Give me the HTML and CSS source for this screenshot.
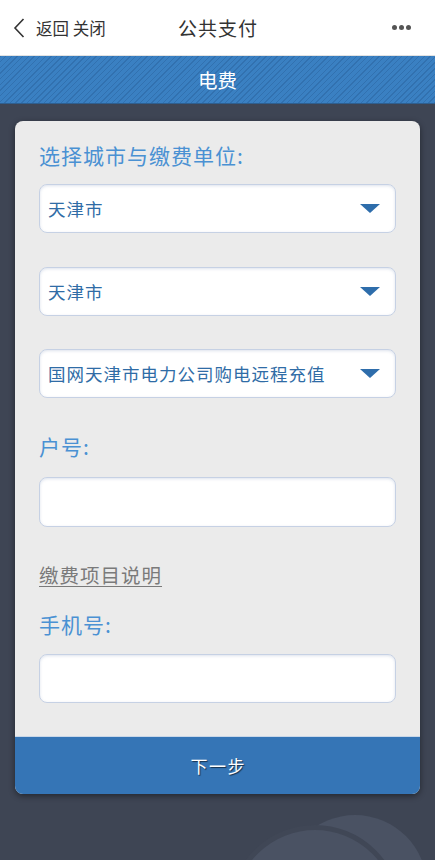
FILE: index.html
```html
<!DOCTYPE html>
<html lang="zh-CN">
<head>
<meta charset="utf-8">
<title>公共支付</title>
<link rel="stylesheet" href="styles.css">
</head>
<body>
<div class="page">
  <div class="nav">
    <div class="nav-left">
      <svg class="chev" width="12" height="20" viewBox="0 0 12 20"><path d="M10.5 1 L2 10 L10.5 19" fill="none" stroke="#333" stroke-width="1.6"/></svg>
      <span class="nav-links">返回 关闭</span>
    </div>
    <div class="nav-title">公共支付</div>
    <div class="nav-more"><span></span><span></span><span></span></div>
  </div>
  <div class="banner">电费</div>
  <div class="main">
    <div class="card">
      <div class="form">
        <div class="label l1">选择城市与缴费单位:</div>
        <div class="select s1"><span>天津市</span><i class="tri"></i></div>
        <div class="select s2"><span>天津市</span><i class="tri"></i></div>
        <div class="select s3"><span>国网天津市电力公司购电远程充值</span><i class="tri"></i></div>
        <div class="label l2">户号:</div>
        <div class="input i1"></div>
        <div class="link">缴费项目说明</div>
        <div class="label l3">手机号:</div>
        <div class="input i2"></div>
      </div>
      <div class="btn">下一步</div>
    </div>
    <div class="deco deco-b"></div>
    <div class="deco deco-a"></div>
  </div>
</div>
</body>
</html>
```
FILE: styles.css
```css
* { box-sizing: border-box; }
html, body { margin: 0; padding: 0; }
body {
  width: 435px;
  height: 860px;
  overflow: hidden;
  font-family: "Noto Sans CJK SC", "Noto Sans", sans-serif;
  background: #3e4554;
}
.page { display: flex; flex-direction: column; height: 860px; }
.nav {
  height: 56px;
  background: #fff;
  border-bottom: 1px solid #e2e2e2;
  display: flex;
  align-items: center;
  position: relative;
  flex-shrink: 0;
}
.nav-left { display: flex; align-items: center; padding-left: 13px; }
.chev { display: block; margin-right: 11px; }
.nav-links { font-size: 16.5px; color: #333; }
.nav-title {
  position: absolute;
  left: 0; right: 0;
  text-align: center;
  font-size: 19px;
  letter-spacing: 1px;
  padding-left: 1px;
  color: #333;
  pointer-events: none;
}
.nav-more { margin-left: auto; margin-right: 24px; display: flex; gap: 2px; }
.nav-more span { width: 5px; height: 5px; border-radius: 50%; background: #555; display: block; }
.banner {
  height: 48px;
  flex-shrink: 0;
  background-color: #3a80c2;
  background-image: repeating-linear-gradient(-45deg, rgba(20,60,110,0.22) 0 1px, transparent 1px 4px);
  color: #fff;
  font-size: 19.5px;
  display: flex;
  align-items: center;
  justify-content: center;
  border-bottom: 1px solid #2f5f8f;
}
.main { flex: 1; position: relative; padding: 17px 15px 0; overflow: hidden; }
.card {
  position: relative;
  z-index: 2;
  background: #ebebeb;
  border-radius: 8px;
  overflow: hidden;
  box-shadow: 0 2px 6px rgba(0,0,0,0.45);
}
.form { padding: 20px 24px 33px; display: flex; flex-direction: column; }
.label {
  font-size: 21px;
  letter-spacing: 1px;
  line-height: 28px;
  color: #4a91d3;
}
.l1 { margin-bottom: 15px; }
.l2 { margin-top: 34px; margin-bottom: 17px; }
.l3 { margin-top: 21px; margin-bottom: 16px; }
.select, .input {
  background: #fff;
  border: 1px solid #c6d1e4;
  border-radius: 8px;
  box-shadow: inset 0 1px 3px rgba(120,140,180,0.25);
}
.select {
  height: 49px;
  display: flex;
  align-items: center;
  padding: 0 15px 0 8px;
}
.select span { font-size: 17.5px; letter-spacing: 1px; color: #2f6ca6; flex: 1; white-space: nowrap; }
.s2 { margin-top: 34px; }
.s3 { margin-top: 33px; }
.tri {
  width: 0; height: 0;
  flex-shrink: 0;
  border-left: 10px solid transparent;
  border-right: 10px solid transparent;
  border-top: 9px solid #2e6dab;
}
.input { height: 50px; }
.i2 { height: 49px; }
.link {
  margin-top: 34px;
  font-size: 19.5px;
  letter-spacing: 1px;
  line-height: 28px;
  color: #7a7a7a;
  text-decoration: underline;
  text-underline-offset: 3px;
  align-self: flex-start;
}
.btn {
  height: 58px;
  background: #3575b6;
  border-top: 1px solid #c9d7e8;
  color: #fff;
  font-size: 17px;
  letter-spacing: 1.5px;
  padding-left: 1.5px;
  display: flex;
  align-items: center;
  justify-content: center;
  text-shadow: 1px 1px 1px rgba(0,0,0,0.6);
}
.deco { position: absolute; border-radius: 50%; z-index: 1; }
.deco-b {
  width: 144px; height: 144px;
  left: 283px; top: 711px;
  background: #4a5263;
}
.deco-a {
  width: 172px; height: 172px;
  left: 229px; top: 721px;
  background: #4a5263;
  border: 5px solid #404756;
}
```
